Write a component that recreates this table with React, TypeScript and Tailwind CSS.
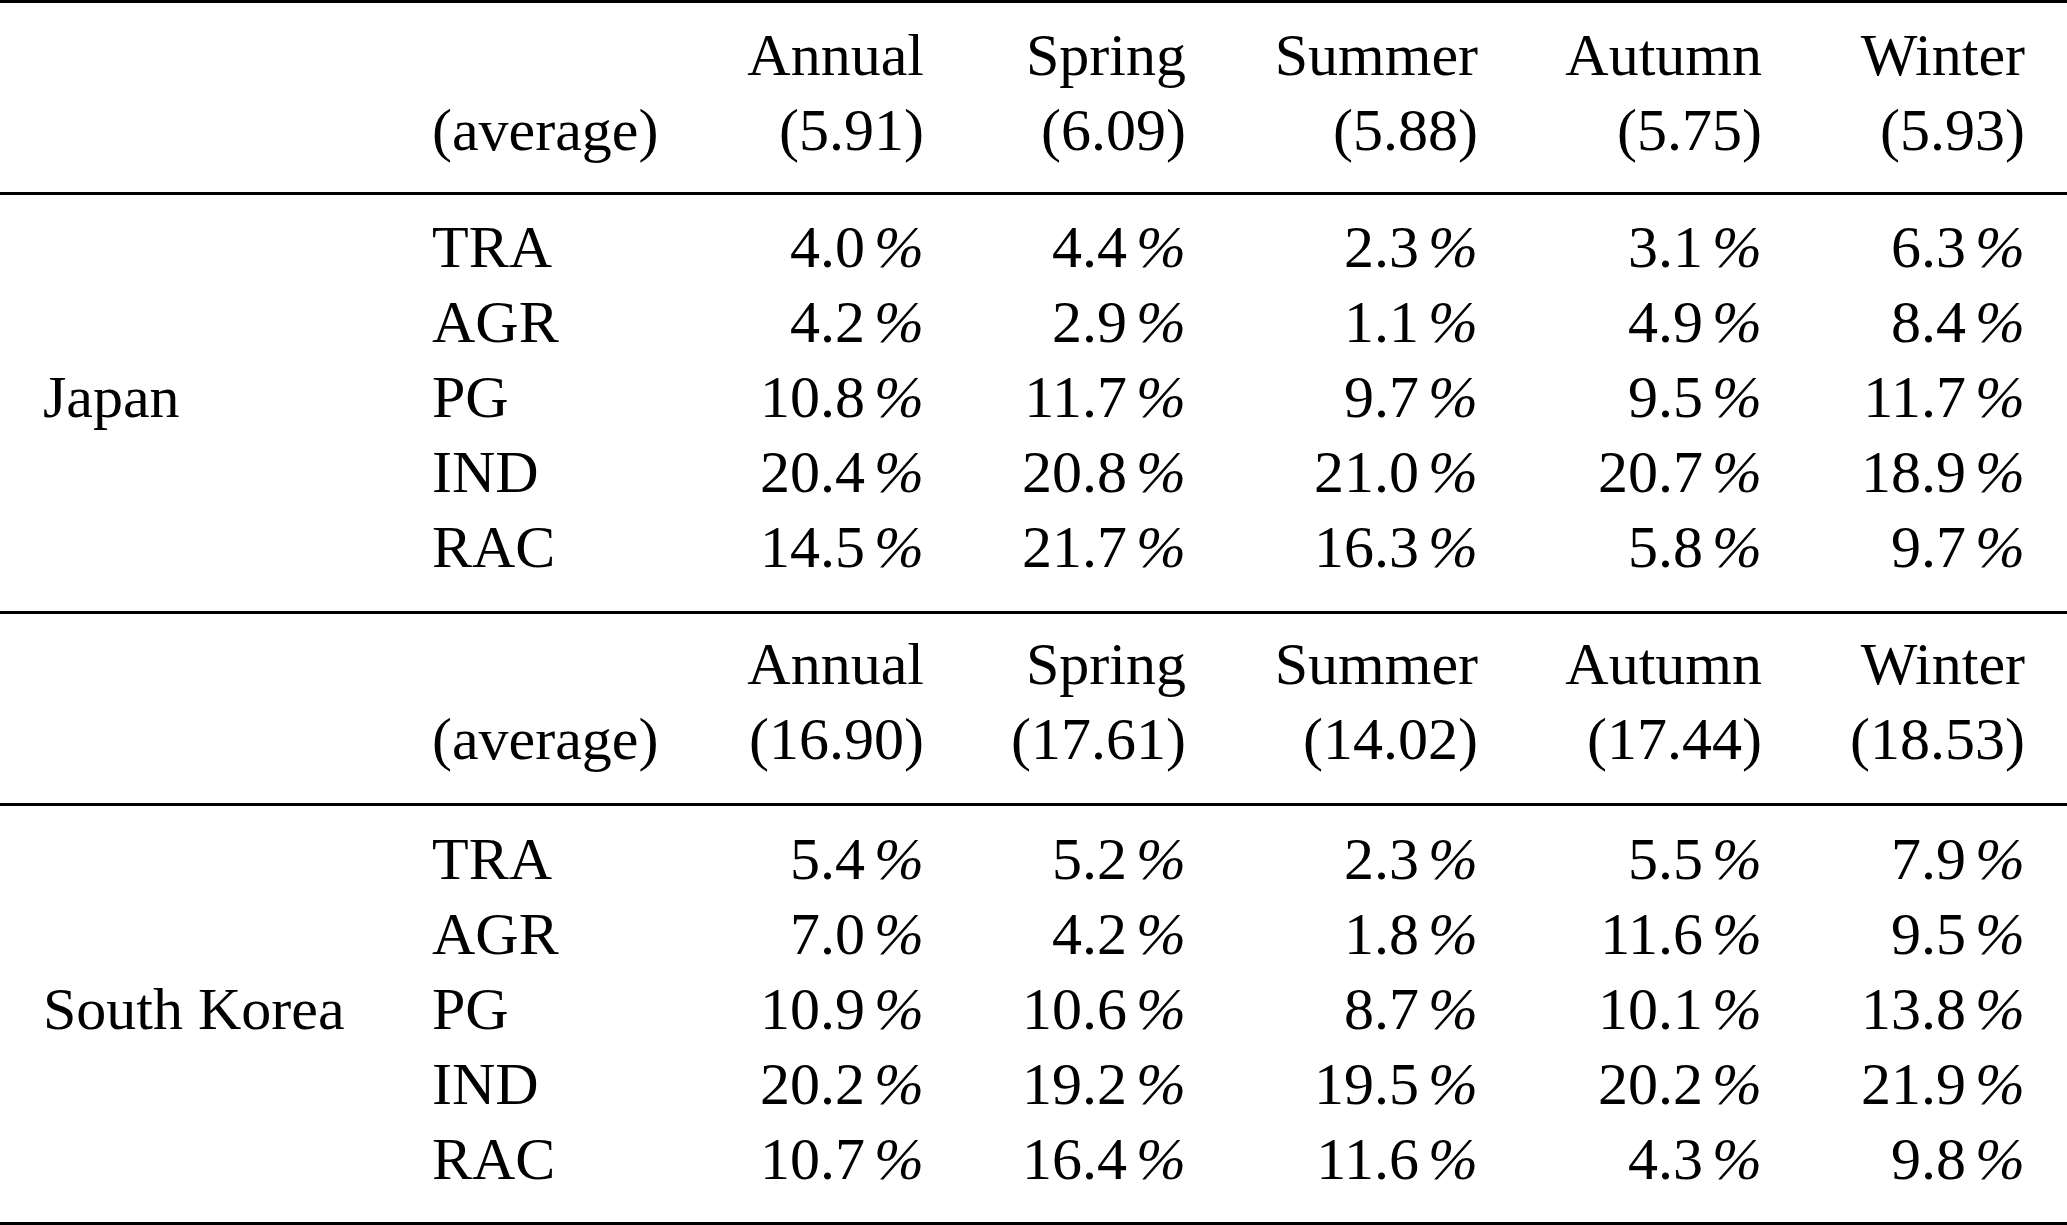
import React from "react";

type Block = {
  country: string;
  avgs: string[];
  rows: { cat: string; vals: string[] }[];
};

const seasons = ["Annual", "Spring", "Summer", "Autumn", "Winter"];

const blocks: Block[] = [
  {
    country: "Japan",
    avgs: ["(5.91)", "(6.09)", "(5.88)", "(5.75)", "(5.93)"],
    rows: [
      { cat: "TRA", vals: ["4.0", "4.4", "2.3", "3.1", "6.3"] },
      { cat: "AGR", vals: ["4.2", "2.9", "1.1", "4.9", "8.4"] },
      { cat: "PG", vals: ["10.8", "11.7", "9.7", "9.5", "11.7"] },
      { cat: "IND", vals: ["20.4", "20.8", "21.0", "20.7", "18.9"] },
      { cat: "RAC", vals: ["14.5", "21.7", "16.3", "5.8", "9.7"] },
    ],
  },
  {
    country: "South Korea",
    avgs: ["(16.90)", "(17.61)", "(14.02)", "(17.44)", "(18.53)"],
    rows: [
      { cat: "TRA", vals: ["5.4", "5.2", "2.3", "5.5", "7.9"] },
      { cat: "AGR", vals: ["7.0", "4.2", "1.8", "11.6", "9.5"] },
      { cat: "PG", vals: ["10.9", "10.6", "8.7", "10.1", "13.8"] },
      { cat: "IND", vals: ["20.2", "19.2", "19.5", "20.2", "21.9"] },
      { cat: "RAC", vals: ["10.7", "16.4", "11.6", "4.3", "9.8"] },
    ],
  },
];

const gridCls =
  "grid grid-cols-[389px_250px_242px_262px_292px_284px_263px] pl-[43px] leading-[75px]";

function Rule() {
  return <div className="h-[3px] w-full bg-black" />;
}

function Header({ avgs, top }: { avgs: string[]; top: boolean }) {
  return (
    <div className={`${gridCls} ${top ? "pt-[15px] pb-[24px]" : "pt-[13px] pb-[26px]"}`}>
      <div />
      <div className="flex flex-col">
        <span>&nbsp;</span>
        <span>(average)</span>
      </div>
      {seasons.map((s, i) => (
        <div key={s} className="flex flex-col items-end">
          <span>{s}</span>
          <span>{avgs[i]}</span>
        </div>
      ))}
    </div>
  );
}

function Data({ block, top }: { block: Block; top: boolean }) {
  return (
    <div className={`${gridCls} ${top ? "pt-[15px] pb-[26px]" : "pt-[16px] pb-[25px]"}`}>
      {block.rows.map((r, ri) => (
        <React.Fragment key={r.cat}>
          <div>{ri === 2 ? block.country : ""}</div>
          <div>{r.cat}</div>
          {r.vals.map((v, vi) => (
            <div key={vi} className="text-right whitespace-nowrap">
              {v}
              <span className="ml-[9px] italic">%</span>
            </div>
          ))}
        </React.Fragment>
      ))}
    </div>
  );
}

export default function App() {
  return (
    <div className="w-[2067px] h-[1225px] bg-white text-black font-['Liberation_Serif',serif] text-[60px] overflow-hidden">
      <Rule />
      <Header avgs={blocks[0].avgs} top={true} />
      <Rule />
      <Data block={blocks[0]} top={true} />
      <Rule />
      <Header avgs={blocks[1].avgs} top={false} />
      <Rule />
      <Data block={blocks[1]} top={false} />
      <Rule />
    </div>
  );
}
